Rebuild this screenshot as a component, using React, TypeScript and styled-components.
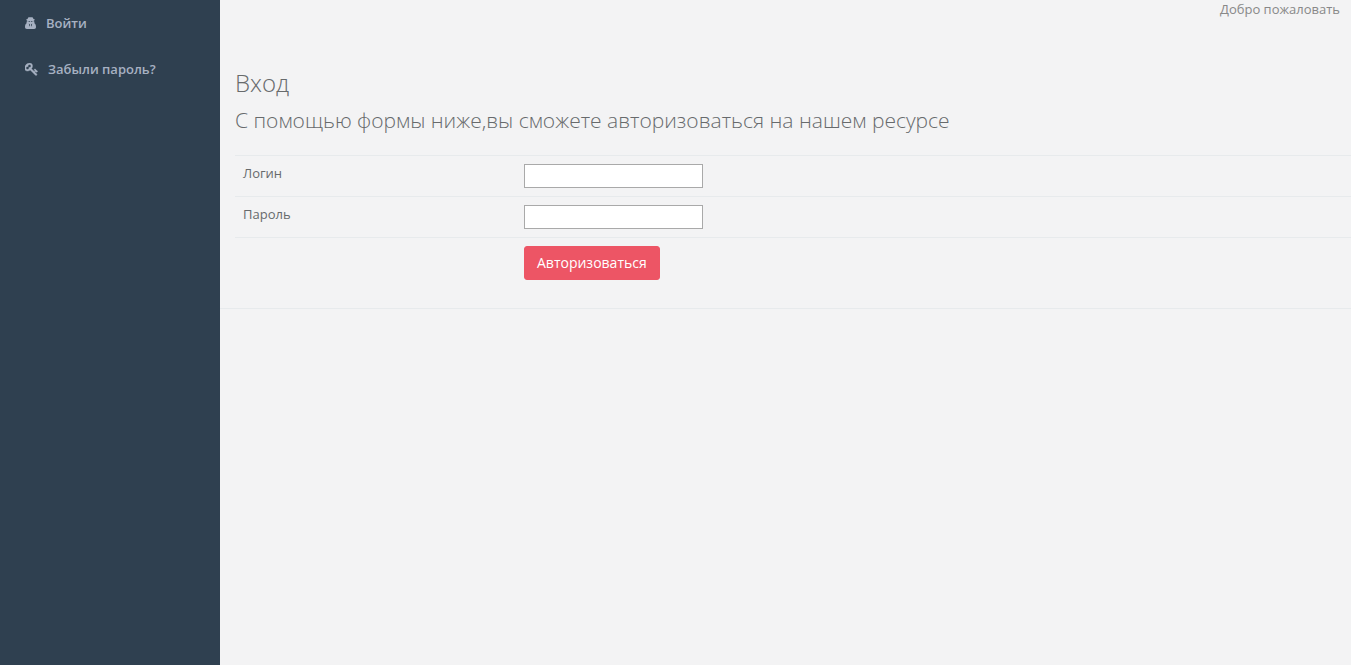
import React from "react";
import styled, { createGlobalStyle } from "styled-components";

const GlobalStyle = createGlobalStyle`
  *, *::before, *::after { box-sizing: border-box; }
  body {
    margin: 0;
    background: #f3f3f4;
    color: #676a6c;
    font-family: "Open Sans", "Noto Sans", sans-serif;
    font-size: 13px;
    line-height: 18px;
  }
`;

const Layout = styled.div`
  display: flex;
  min-height: 100vh;
`;

const Sidebar = styled.nav`
  flex: 0 0 220px;
  background: #2f4050;
`;

const NavLink = styled.a`
  display: flex;
  align-items: center;
  height: 46px;
  padding: 0 25px;
  gap: 10px;
  color: #a7b1c2;
  font-weight: 600;
  text-decoration: none;
`;

const Icon = styled.svg`
  flex: none;
  fill: currentColor;
`;

const Main = styled.main`
  flex: 1;
  min-width: 0;
`;

const TopBar = styled.header`
  height: 60px;
  padding: 0 11px;
  text-align: right;
  color: #888888;
`;

const Content = styled.section`
  padding: 10px 0 20px 15px;
  border-bottom: 1px solid #e7eaec;
`;

const Title = styled.h2`
  margin: 0 0 10px;
  font-size: 24px;
  line-height: 26px;
  font-weight: 300;
`;

const Lead = styled.h3`
  margin: 0 0 20px;
  font-size: 21px;
  line-height: 29px;
  font-weight: 300;
`;

const FormRow = styled.div`
  display: grid;
  grid-template-columns: 281px 1fr;
  align-items: start;
  padding: 8px;
  border-top: 1px solid #e7eaec;
`;

const Input = styled.input`
  width: 179px;
  height: 24px;
  padding: 1px 2px;
  border: 1px solid #a9a9a9;
  background: #ffffff;
  font: inherit;
`;

const Submit = styled.button`
  grid-column: 2;
  justify-self: start;
  padding: 6px 12px;
  border: 1px solid #ed5565;
  border-radius: 3px;
  background: #ed5565;
  color: #ffffff;
  font-family: inherit;
  font-size: 14px;
  line-height: 20px;
  cursor: pointer;
`;

function SecretUserIcon() {
  return (
    <Icon width="11" height="12" viewBox="0 0 11 12" aria-hidden="true">
      <path
        fillRule="evenodd"
        d="M3.3.4C4 0 4.800.3 5.500.3S7 0 7.700.4c.5.5.6 1 .7 1.600.9.200 1.400.5 1.400.8 0 .3-.3.6-1 .8.1.4.1.8 0 1.200h1l-.6 1.300c1.200.8 1.800 2 1.800 4C11 11.400 10.400 12 9.100 12H1.900C.6 12 0 11.400 0 10.100c0-2 .6-3.200 1.800-4L1.200 4.800h1c-.1-.4-.1-.8 0-1.200-.7-.2-1-.5-1-.8 0-.3.5-.6 1.400-.8.1-.6.2-1.100.7-1.600zM3.400 4.300c.2.6.5.8 1 .8s.7-.2.800-.6h.6c.1.4.3.600.8.600s.8-.2 1-.8c-1.400.2-2.800.2-4.200 0zM3.800 6.600l.7 3.200.6-1.800-.4-.8zM7.200 6.600l-.7 3.200L5.900 8l.4-.8z"
      />
    </Icon>
  );
}

function KeyIcon() {
  return (
    <Icon
      width="13"
      height="13"
      viewBox="64 128 1664 1664"
      stroke="currentColor"
      strokeWidth="50"
      aria-hidden="true"
    >
      <path d="M832 512q0-80-56-136t-136-56-136 56-56 136q0 42 19 83-41-19-83-19-80 0-136 56t-56 136 56 136 136 56 136-56 56-136q0-42-19-83 41 19 83 19 80 0 136-56t56-136zm851 704q0 17-49 66t-66 49q-9 0-28.5-16t-36.5-33-38.5-40-24.5-26l-96 96 220 220q28 28 28 68 0 42-39 81t-81 39q-40 0-68-28l-671-671q-176 131-365 131-163 0-265.5-102.5t-102.5-265.5q0-160 95-313t248-248 313-95q163 0 265.5 102.5t102.5 265.5q0 189-131 365l355 355 96-96q-3-3-26-24.5t-40-38.5-33-36.5-16-28.5q0-17 49-66t66-49q13 0 23 10 6 6 46 44.5t82 79.5 86.5 86 73 78 28.5 41z" />
    </Icon>
  );
}

export default function App() {
  return (
    <>
      <GlobalStyle />
      <Layout>
        <Sidebar>
          <NavLink href="#login"><SecretUserIcon />Войти</NavLink>
          <NavLink href="#reset"><KeyIcon />Забыли пароль?</NavLink>
        </Sidebar>
        <Main>
          <TopBar>Добро пожаловать</TopBar>
          <Content>
            <Title>Вход</Title>
            <Lead>С помощью формы ниже,вы сможете авторизоваться на нашем ресурсе</Lead>
            <form onSubmit={(e) => e.preventDefault()}>
              <FormRow>
                <label htmlFor="login">Логин</label>
                <Input id="login" name="login" type="text" />
              </FormRow>
              <FormRow>
                <label htmlFor="password">Пароль</label>
                <Input id="password" name="password" type="password" />
              </FormRow>
              <FormRow>
                <Submit type="submit">Авторизоваться</Submit>
              </FormRow>
            </form>
          </Content>
        </Main>
      </Layout>
    </>
  );
}
